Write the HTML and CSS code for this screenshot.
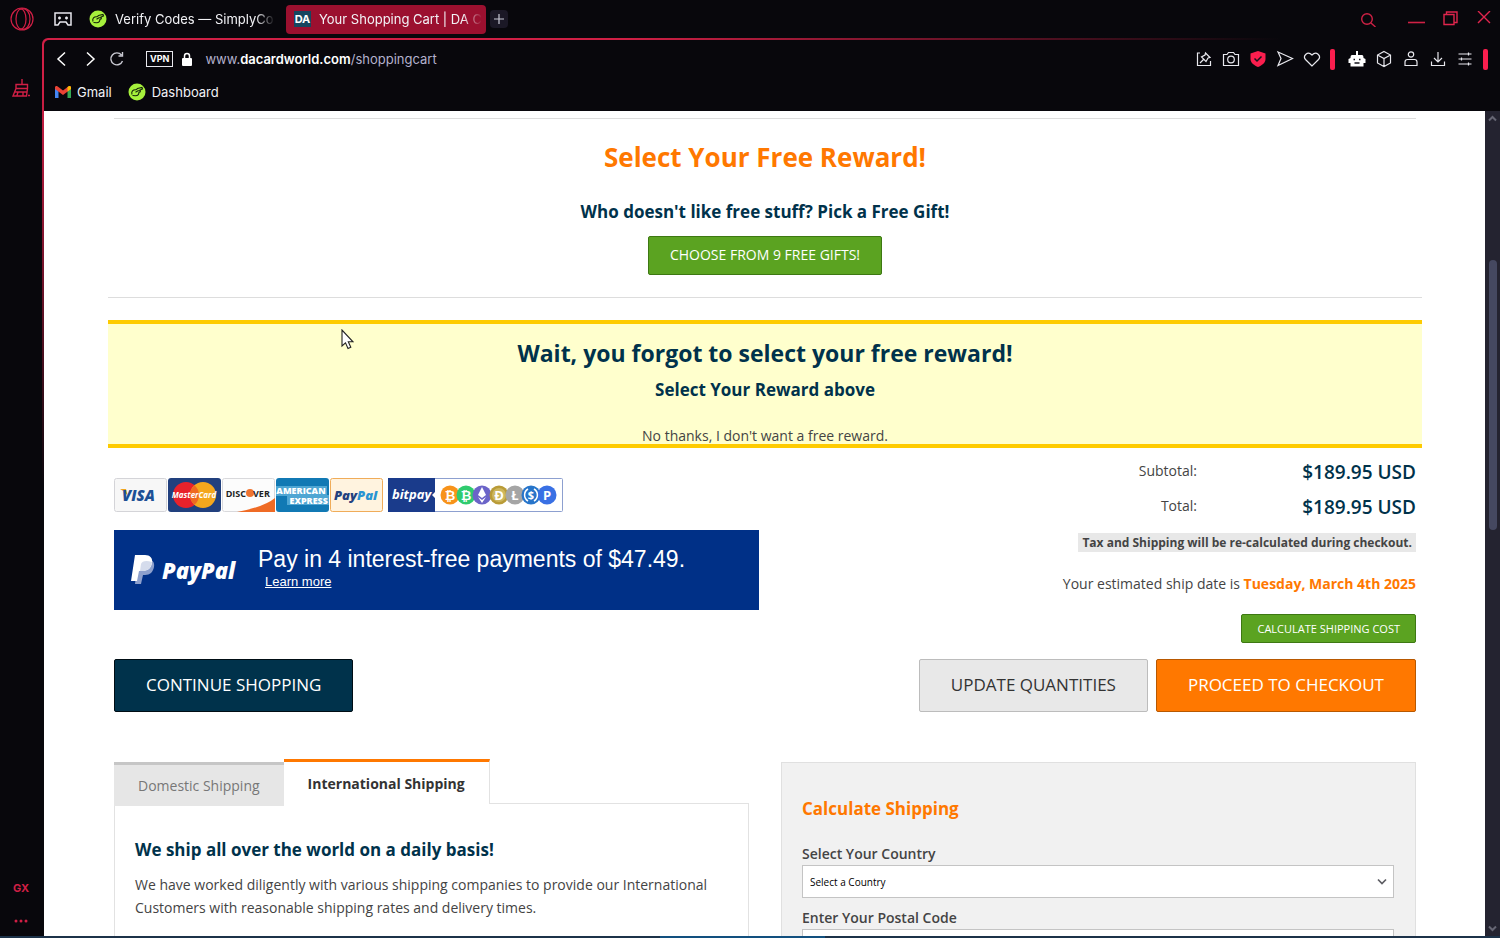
FILE: index.html
```html
<!DOCTYPE html>
<html lang="en">
<head>
    <meta charset="UTF-8">
    <meta name="viewport" content="width=device-width, initial-scale=1.0">
    <title>Your Shopping Cart | DA Card World</title>
    <link rel="stylesheet" href="styles.css">
</head>
<body>
    <!-- Shared symbols -->
    <svg class="symbols" aria-hidden="true">
        <symbol id="simply" viewBox="0 0 18 18">
            <circle cx="9" cy="9" r="8.5" fill="#a6f13c"/>
            <path d="M4 11.500C3 8.500 5 6.500 8 6.800L9.500 5.500 14 4.500 14.500 6 11.500 7.300M7.500 9.200L10 7.800 12 7.500C13 8.500 12 9.500 10.500 9.500M10.500 9.500C11.500 10.800 10 12.500 7.500 12.800L4.500 12.500" fill="none" stroke="#16240b" stroke-width="1.100"/>
        </symbol>
    </svg>

    <header class="tabbar">
        <button class="icon-btn opera" aria-label="Menu">
            <svg width="24" height="24" viewBox="0 0 24 24" fill="none" stroke="#d01f45" stroke-width="1.200"><circle cx="12" cy="12" r="11"/><ellipse cx="11" cy="12" rx="5" ry="10"/><path d="M10 2C17 0 20 6 20 12S17 24 10 22"/></svg>
        </button>
        <button class="icon-btn" aria-label="GX Corner">
            <svg width="18" height="14" viewBox="0 0 18 14" fill="none" stroke="#e8e8ee" stroke-width="1.500"><path d="M1 1H17V13H14L12 10H6L4 13H1Z"/><path d="M4 6H7M5.500 4.500V7.500M11 6H14M12.500 4.500V7.500"/></svg>
        </button>
        <a class="tab" href="#"><svg width="18" height="18"><use href="#simply"/></svg><span class="tab-title">Verify Codes — SimplyCo</span></a>
        <a class="tab active" href="#"><span class="da-logo">DA</span><span class="tab-title">Your Shopping Cart | DA C</span></a>
        <button class="icon-btn new-tab" aria-label="New tab"><svg width="12" height="12" viewBox="0 0 12 12" stroke="#c8c8d4" stroke-width="1.200"><path d="M6 1V11M1 6H11"/></svg></button>
        <div class="window-controls">
            <button class="icon-btn search" aria-label="Search tabs"><svg width="16" height="16" viewBox="0 0 16 16" fill="none" stroke="#cf2145" stroke-width="1.400"><circle cx="7" cy="8" r="5.300"/><path d="M11 12L15.500 16"/></svg></button>
            <button class="icon-btn" aria-label="Minimize"><svg width="17" height="16" viewBox="0 0 17 16" stroke="#cf2145" stroke-width="1.600"><path d="M0 11.500H17"/></svg></button>
            <button class="icon-btn" aria-label="Restore"><svg width="16" height="16" viewBox="0 0 16 16" fill="none" stroke="#e0254d" stroke-width="1.400"><path d="M1 3.500H11V13.500H1ZM3.500 3.500V1H14V11.500H11"/></svg></button>
            <button class="icon-btn" aria-label="Close"><svg width="14" height="16" viewBox="0 0 14 16" stroke="#e0254d" stroke-width="1.400"><path d="M1 0L13 12M13 0L1 12"/></svg></button>
        </div>
    </header>

    <div class="workspace">
        <nav class="sidebar">
            <button class="icon-btn" aria-label="Cleaner"><svg width="20" height="20" viewBox="0 0 20 20" fill="none" stroke="#d01f45" stroke-width="1.400"><path d="M11 0V5M5 5.500H16.500V9.500H5ZM5 9.500L2 17H15.500L16.500 9.500M4 13H15.500M7 13L6 16.500M12 13V16.500M17 16.500H19"/></svg></button>
            <div class="sidebar-bottom">
                <span class="gx">GX</span>
                <button class="icon-btn" aria-label="More"><svg width="14" height="4" viewBox="0 0 14 4" fill="#d01f45"><circle cx="2" cy="2" r="1.500"/><circle cx="7" cy="2" r="1.500"/><circle cx="12" cy="2" r="1.500"/></svg></button>
            </div>
        </nav>

        <div class="frame">
            <div class="window">
                <div class="toolbar">
                    <button class="icon-btn" aria-label="Back"><svg width="18" height="18" viewBox="0 0 18 18" fill="none" stroke="#fff" stroke-width="1.500"><path d="M13 2.500L6 9L13 15.500"/></svg></button>
                    <button class="icon-btn" aria-label="Forward"><svg width="18" height="18" viewBox="0 0 18 18" fill="none" stroke="#fff" stroke-width="1.500"><path d="M7 2.500L14 9L7 15.500"/></svg></button>
                    <button class="icon-btn" aria-label="Reload"><svg width="18" height="18" viewBox="0 0 18 18" fill="none" stroke="#c9c9d2" stroke-width="1.400"><path d="M13.500 5A6 6 0 1 0 14.500 11M14.500 2V6H10.500"/></svg></button>
                    <div class="address">
                        <span class="vpn">VPN</span>
                        <svg width="12" height="15" viewBox="0 0 12 15"><rect x="1" y="6" width="10" height="8" rx="1" fill="#fff"/><path d="M3.500 6V4A2.500 2.500 0 0 1 8.500 4V6" fill="none" stroke="#fff" stroke-width="1.500"/></svg>
                        <span class="url">www.<b>dacardworld.com</b>/shoppingcart</span>
                    </div>
                    <div class="tools">
                        <svg width="18" height="18" viewBox="0 0 18 18"><path d="M5 3H2.500V15.500H15.500V11M10.500 3L15 7.500L13 8L11 11.500L6.500 7L10 5ZM8.500 9.500L5 13"/></svg>
                        <svg width="18" height="18" viewBox="0 0 18 18"><path d="M1.500 4.500H5L6.500 2.500H11.500L13 4.500H16.500V15.500H1.500Z"/><circle cx="9" cy="9.500" r="3.300"/></svg>
                        <svg width="18" height="18" viewBox="0 0 18 18"><path class="pink" d="M9 1L16.500 3.500V9C16.500 13 12.500 15.500 9 17C5.500 15.500 1.500 13 1.500 9V3.500Z"/><path class="check" d="M5.500 8.500L8 11L12.500 6.500"/></svg>
                        <svg width="18" height="18" viewBox="0 0 18 18"><path d="M2 2L16.500 8.500L2 15.500L5 8.500Z"/></svg>
                        <svg width="18" height="18" viewBox="0 0 18 18"><path d="M9 16L2.500 9.500C-.5 6 4.500 .5 9 5C13.500 .5 18.500 6 15.500 9.500Z"/></svg>
                        <span class="marker"></span>
                        <svg class="robot" width="18" height="18" viewBox="0 0 18 18"><path class="solid" d="M8 1H10V5H14C15 5 15.500 6 15.500 8L17.500 9V13H15.500V16.500H2.500V13H.5V9L2.500 8C2.500 6 3 5 4 5H8Z"/><path class="check" d="M5.500 9.500H7M11 9.500H12.500M6.500 13H11.500"/></svg>
                        <svg width="18" height="18" viewBox="0 0 18 18"><path d="M9 1.500L15.500 5V13L9 16.500L2.500 13V5ZM2.500 5L9 8.500L15.500 5M9 8.500V16.500"/></svg>
                        <svg width="18" height="18" viewBox="0 0 18 18"><circle cx="9" cy="4.500" r="2.700"/><path d="M3 15.500V12C3 10.500 4 9.500 5.500 9.500H12.500C14 9.500 15 10.500 15 12V15.500Z"/></svg>
                        <svg width="18" height="18" viewBox="0 0 18 18"><path d="M2.500 11.500V15.500H15.500V11.500M9 2V12M5 8L9 12L13 8"/></svg>
                        <svg width="18" height="18" viewBox="0 0 18 18"><path d="M2.500 4H15.500M2.500 9H15.500M2.500 14H15.500M12.500 2.500V5.500M5.500 7.500V10.500M12.500 12.500V15.500"/></svg>
                        <span class="marker"></span>
                    </div>
                </div>

                <div class="bookmarks">
                    <a href="#"><svg width="16" height="12" viewBox="0 0 16 12"><path d="M0 1.500V12H3.500V4.500Z" fill="#4285f4"/><path d="M16 1.500V12H12.500V4.500Z" fill="#34a853"/><path d="M0 3V1.500C0 0 1.500-.5 2.700.4L8 4.500 13.300.4C14.500-.5 16 0 16 1.500V3L8 9Z" fill="#ea4335"/><path d="M12.500 1V5.600L16 3V1.500C16 0 14.500-.5 13.300.4Z" fill="#fbbc04"/></svg>Gmail</a>
                    <a href="#"><svg width="18" height="18"><use href="#simply"/></svg>Dashboard</a>
                </div>

                <div class="viewport">
                    <main class="page">
                        <section class="reward">
                            <h1>Select Your Free Reward!</h1>
                            <h2>Who doesn't like free stuff? Pick a Free Gift!</h2>
                            <button class="btn green">CHOOSE FROM 9 FREE GIFTS!</button>
                        </section>

                        <section class="notice">
                            <h2>Wait, you forgot to select your free reward!</h2>
                            <h3>Select Your Reward above</h3>
                            <a href="#">No thanks, I don't want a free reward.</a>
                        </section>

                        <section class="summary">
                            <div class="payments">
                                <div class="cards">
                                    <svg width="53" height="34" viewBox="0 0 53 34"><rect x=".5" y=".5" width="52" height="33" rx="2" fill="#f7f7f7" stroke="#d4d4d8"/><path d="M6 11H12L14 19Q12 14 6 11Z" fill="#f0a51e"/><text x="8" y="23" class="logo-text visa">VISA</text></svg>
                                    <svg width="53" height="34" viewBox="0 0 53 34"><rect width="53" height="34" rx="3" fill="#21407e"/><circle cx="18" cy="17" r="13" fill="#e8222b"/><circle cx="35" cy="17" r="13" fill="#f4a71d"/><path d="M26.500 7.200A13 13 0 0 1 26.500 26.800A13 13 0 0 1 26.500 7.200Z" fill="#ef6a20"/><text x="26" y="20" text-anchor="middle" class="logo-text master">MasterCard</text></svg>
                                    <svg width="53" height="34" viewBox="0 0 53 34"><rect x=".5" y=".5" width="52" height="33" rx="2" fill="#fcfcfc" stroke="#d9d9dc"/><path d="M15 34Q42 29 53 20V34Z" fill="#ef6b25"/><circle cx="28" cy="15" r="4" fill="#ee7430"/><text x="24" y="19" text-anchor="end" class="logo-text discover">DISC</text><text x="31" y="19" class="logo-text discover">VER</text></svg>
                                    <svg width="53" height="34" viewBox="0 0 53 34"><rect width="53" height="34" rx="3" fill="#1179b4"/><path d="M0 8H51V17H53V27H11V18H0Z" fill="#4fa6d3"/><text x="25" y="16" text-anchor="middle" class="logo-text amex">AMERICAN</text><text x="52" y="26" text-anchor="end" class="logo-text amex">EXPRESS</text></svg>
                                    <svg width="53" height="34" viewBox="0 0 53 34"><rect x=".5" y=".5" width="52" height="33" rx="2" fill="#fff3df" stroke="#f0ac59"/><text x="4" y="22" class="logo-text pp">Pay<tspan fill="#2894d2">Pal</tspan></text></svg>
                                    <svg class="bitpay" width="175" height="34" viewBox="0 0 175 34"><rect x=".5" y=".5" width="174" height="33" rx="1" fill="#fff" stroke="#8da0d0"/><path d="M0 0H47V14L44 17L47 20V34H0Z" fill="#1a3b8b"/><text x="4" y="21" class="logo-text bp">bitpay</text>
                                        <g class="coins"><circle cx="62" cy="17" r="9.500" fill="#f7931a"/><circle cx="78" cy="17" r="9.500" fill="#2fcb6e"/><circle cx="94" cy="17" r="9.500" fill="#6b64c8"/><circle cx="111" cy="17" r="9.500" fill="#b99b37"/><circle cx="111" cy="17" r="7" fill="#cdb65c"/><circle cx="127" cy="17" r="9.500" fill="#a5a5a5"/><circle cx="143" cy="17" r="9.500" fill="#2775ca"/><circle cx="159" cy="17" r="9.500" fill="#3970e4"/>
                                        <text x="62" y="22">₿</text><text x="78" y="22">₿</text><path d="M94 9L98 17L94 20L90 17ZM90 19L94 25L98 19L94 22Z" fill="#fff"/><text x="111" y="22">Ð</text><text x="127" y="22">Ł</text><text x="143" y="21" class="small">$</text><path d="M140 11A7 7 0 0 0 140 23M146 11A7 7 0 0 1 146 23" fill="none" stroke="#fff" stroke-width="1.500"/><text x="159" y="22">P</text></g></svg>
                                </div>
                                <div class="paypal-banner">
                                    <svg width="108" height="30" viewBox="0 0 108 30"><path d="M7 4H16C21 4 24 7 23 12C22 17 19 20 14 20H12L10 29H4Z" fill="#8da0cd"/><path d="M4 0H14C19 0 22 3 21 8C20 14 16 16 11 16H8L6 26H0Z" fill="#fff"/><path d="M9 16L10 9C11 6 15 5 21 7C20 14 16 16 11 16Z" fill="#d5dcec"/><text x="31" y="24" class="logo-text paypal-word">PayPal</text></svg>
                                    <div>
                                        <p>Pay in 4 interest-free payments of $47.49.</p>
                                        <a href="#">Learn more</a>
                                    </div>
                                </div>
                            </div>

                            <div class="totals">
                                <table>
                                    <tr><th scope="row">Subtotal:</th><td>$189.95 USD</td></tr>
                                    <tr><th scope="row">Total:</th><td>$189.95 USD</td></tr>
                                </table>
                                <p class="tax">Tax and Shipping will be re-calculated during checkout.</p>
                                <p class="ship-date">Your estimated ship date is <strong>Tuesday, March 4th 2025</strong></p>
                                <button class="btn green small">CALCULATE SHIPPING COST</button>
                            </div>
                        </section>

                        <section class="actions">
                            <button class="btn navy large">CONTINUE SHOPPING</button>
                            <button class="btn grey large push">UPDATE QUANTITIES</button>
                            <button class="btn orange large">PROCEED TO CHECKOUT</button>
                        </section>

                        <section class="shipping">
                            <div class="info">
                                <div class="info-tabs" role="tablist">
                                    <button role="tab" aria-selected="false">Domestic Shipping</button>
                                    <button role="tab" aria-selected="true">International Shipping</button>
                                </div>
                                <div class="info-body">
                                    <h3>We ship all over the world on a daily basis!</h3>
                                    <p>We have worked diligently with various shipping companies to provide our International Customers with reasonable shipping rates and delivery times.</p>
                                </div>
                            </div>
                            <form class="calculator">
                                <h3>Calculate Shipping</h3>
                                <label for="country">Select Your Country</label>
                                <div class="select">
                                    <select id="country"><option>Select a Country</option></select>
                                    <svg width="10" height="8" viewBox="0 0 10 8" fill="none" stroke="#5d5d63" stroke-width="1.700"><path d="M1 1.500L5 5.500L9 1.500"/></svg>
                                </div>
                                <label for="postal">Enter Your Postal Code</label>
                                <input id="postal" type="text">
                            </form>
                        </section>
                    </main>
                    <div class="scrollbar">
                        <svg width="9" height="7" viewBox="0 0 9 7" fill="none" stroke="#666674" stroke-width="2"><path d="M1 5.500L4.500 2L8 5.500"/></svg>
                        <div class="thumb"></div>
                        <svg width="9" height="7" viewBox="0 0 9 7" fill="none" stroke="#666674" stroke-width="2"><path d="M1 1.500L4.500 5L8 1.500"/></svg>
                    </div>
                </div>
            </div>
        </div>
    </div>

    <div class="taskbar-edge"></div>
    <svg class="cursor" width="13" height="21" viewBox="0 0 13 21"><path d="M1 1V17L4.500 13.800L7 19.500L9.800 18.300L7.300 12.800H12Z" fill="#fff" stroke="#222" stroke-width="1.100"/></svg>
</body>
</html>
```
FILE: styles.css
```css
* {
    box-sizing: border-box;
    margin: 0;
    padding: 0;
}

body {
    height: 100vh;
    display: flex;
    flex-direction: column;
    overflow: hidden;
    background: #08070c;
    color: #444;
    font-family: "Open Sans", sans-serif;
    font-size: 14px;
}

button, input, select {
    font-family: inherit;
}

a {
    color: inherit;
    text-decoration: none;
}

.symbols {
    display: none;
}

.icon-btn {
    display: flex;
    align-items: center;
    justify-content: center;
    border: 0;
    background: none;
    flex-shrink: 0;
}

/* Browser chrome */
.tabbar {
    height: 38px;
    display: flex;
    align-items: center;
    font-family: Inter, sans-serif;
    font-size: 13px;
    color: #f2f2f6;
}

.opera {
    width: 43px;
}

.tabbar .opera + .icon-btn {
    width: 40px;
}

.tab {
    width: 196px;
    height: 29px;
    padding: 0 4px 0 6px;
    display: flex;
    align-items: center;
    gap: 8px;
    border-radius: 4px;
}

.tab svg {
    flex-shrink: 0;
}

.tab.active {
    width: 200px;
    margin-left: 7px;
    padding-left: 8px;
    background: #9b102f;
}

.tab-title {
    flex: 1;
    white-space: nowrap;
    mask-image: linear-gradient(to right, #000 88%, transparent);
}

.da-logo {
    width: 17px;
    height: 16px;
    background: #17465f;
    color: #fff;
    font-size: 11px;
    font-weight: 700;
    line-height: 16px;
    text-align: center;
}

.new-tab {
    width: 18px;
    height: 18px;
    margin-left: 4px;
    border-radius: 4px;
    background: #1b1826;
}

.window-controls {
    margin-left: auto;
    padding-right: 9px;
    display: flex;
    align-items: center;
    gap: 18px;
}

.window-controls .search {
    margin-right: 14px;
}

.workspace {
    flex: 1;
    min-height: 0;
    display: flex;
}

.sidebar {
    width: 42px;
    padding: 41px 0 13px;
    display: flex;
    flex-direction: column;
    align-items: center;
    justify-content: space-between;
}

.sidebar-bottom {
    display: flex;
    flex-direction: column;
    align-items: center;
    gap: 24px;
}

.gx {
    color: #d01f45;
    font: 700 11px/14px Inter, sans-serif;
}

/* red outline, fading out to the right and downwards */
.frame {
    flex: 1;
    min-width: 0;
    padding: 2px 0 0 2px;
    border-radius: 6px 0 0 0;
    background:
        linear-gradient(to bottom, transparent 5%, #08070c 50%) left / 2px 100% no-repeat,
        linear-gradient(to right, #d01f45, #d01f45 40%, #08070c 85%);
}

.window {
    height: 100%;
    display: flex;
    flex-direction: column;
    border-radius: 5px 0 0 0;
    background: #08070c;
}

.toolbar {
    height: 38px;
    padding: 0 12px 0 8px;
    display: flex;
    align-items: center;
    gap: 10px;
}

.address {
    flex: 1;
    margin-left: 10px;
    display: flex;
    align-items: center;
    gap: 8px;
    font-family: Inter, sans-serif;
    font-size: 13px;
    color: #b4b1cc;
}

.address b {
    color: #fff;
    font-weight: 600;
}

.url {
    margin-left: 4px;
}

.vpn {
    padding: 0 3px;
    border: 1px solid #e8e8ee;
    color: #fff;
    font-size: 9px;
    font-weight: 700;
    line-height: 14px;
}

.tools {
    display: flex;
    align-items: center;
    gap: 9px;
}

.tools svg {
    fill: none;
    stroke: #e8e8ee;
    stroke-width: 1.2;
}

.tools .pink {
    fill: #fa1e4e;
    stroke: none;
}

.tools .solid {
    fill: #fff;
    stroke: none;
}

.tools .check {
    stroke: #15131c;
    stroke-width: 1.5;
}

.marker {
    width: 5px;
    height: 21px;
    border-radius: 2px;
    background: #fa1e4e;
}

.robot {
    margin-left: 4px;
}

.bookmarks {
    height: 33px;
    padding: 0 11px 5px;
    display: flex;
    align-items: center;
    gap: 16px;
    color: #f2f2f6;
    font-family: Inter, sans-serif;
    font-size: 13px;
}

.bookmarks a {
    display: flex;
    align-items: center;
    gap: 6px;
}

.viewport {
    flex: 1;
    min-height: 0;
    display: flex;
    background: #fff;
}

.scrollbar {
    width: 15px;
    padding: 4px 0;
    display: flex;
    flex-direction: column;
    align-items: center;
    background: #242330;
}

.thumb {
    width: 8px;
    height: 33%;
    margin: 138px 0 auto;
    border-radius: 4px;
    background: #454860;
}

/* Cart page */
.page {
    flex: 1;
    min-width: 0;
    padding: 7px 69px 0 70px;
    overflow: hidden;
}

.page h1,
.page h2,
.page h3 {
    color: #00324b;
    font-weight: 700;
}

.btn {
    border: 1px solid;
    border-radius: 2px;
    font-weight: 400;
    color: #fff;
}

.btn.green {
    height: 39px;
    padding: 0 21px 2px;
    background: #5ba321;
    border-color: #3d7812;
    font-size: 14px;
}

.btn.green.small {
    height: 29px;
    padding: 0 15px;
    font-size: 11px;
}

.btn.large {
    height: 53px;
    padding: 0 31px 2px;
    font-size: 17px;
}

.btn.navy {
    background: #00324b;
    border-color: #000d14;
}

.btn.grey {
    background: #e8e8e8;
    border-color: #bcbcbc;
    color: #333;
}

.btn.orange {
    background: #ff7800;
    border-color: #b85800;
}

.reward {
    border-top: 1px solid #ddd;
    display: flex;
    flex-direction: column;
    align-items: center;
}

.page .reward h1 {
    margin-top: 19px;
    color: #ff7800;
    font-size: 26px;
    line-height: 38px;
}

.reward h2 {
    margin: 24px 0 12px;
    font-size: 17px;
    line-height: 24px;
}

/* full-width rule between the reward picker and the notice */
.reward::after {
    content: "";
    align-self: stretch;
    height: 1px;
    margin: 22px -6px 0;
    background: #ddd;
}

.notice {
    height: 128px;
    margin: 22px -6px 0;
    padding-top: 14px;
    display: flex;
    flex-direction: column;
    align-items: center;
    background: #ffffcd;
    border-top: 4px solid #fecb00;
    border-bottom: 4px solid #fecb00;
}

.notice h2 {
    font-size: 23px;
    line-height: 30px;
}

.notice h3 {
    margin: 10px 0 24px;
    font-size: 17px;
    line-height: 24px;
}

.notice a {
    line-height: 20px;
}

.summary {
    display: flex;
    justify-content: space-between;
}

.payments {
    width: 645px;
    padding-top: 30px;
}

.cards {
    display: flex;
    gap: 1px;
    margin-bottom: 18px;
}

.bitpay {
    margin-left: 4px;
}

.logo-text {
    font-family: "Open Sans", sans-serif;
    font-weight: 800;
    font-style: italic;
}

.visa {
    fill: #1c5095;
    font-size: 15px;
}

.master {
    fill: #fff;
    font-size: 8px;
    font-weight: 700;
}

.discover {
    fill: #222;
    font-size: 9px;
    font-style: normal;
    font-weight: 700;
}

.amex {
    fill: #fff;
    font-size: 9px;
    font-style: normal;
}

.pp {
    fill: #23417f;
    font-size: 13px;
}

.bp {
    fill: #fff;
    font-size: 13px;
    font-weight: 700;
}

.coins text {
    fill: #fff;
    font-size: 13px;
    font-weight: 700;
    text-anchor: middle;
}

.coins .small {
    font-size: 11px;
}

.paypal-word {
    fill: #fff;
    font-size: 22px;
}

.paypal-banner {
    height: 80px;
    padding: 0 17px;
    display: flex;
    align-items: center;
    gap: 19px;
    background: #003087;
    color: #fff;
    font-family: "Liberation Sans", sans-serif;
}

.paypal-banner div {
    padding-bottom: 6px;
}

.paypal-banner p {
    font-size: 23px;
    line-height: 28px;
}

.paypal-banner a {
    margin-left: 7px;
    font-size: 13px;
    text-decoration: underline;
}

.totals {
    padding-top: 7px;
    display: flex;
    flex-direction: column;
    align-items: flex-end;
}

.totals table {
    border-collapse: collapse;
    text-align: right;
}

.totals tr {
    height: 35px;
}

.totals th {
    padding-bottom: 4px;
    font-weight: 400;
}

.totals td {
    width: 219px;
    padding-bottom: 2px;
    color: #00324b;
    font-size: 19px;
    font-weight: 600;
}

.tax {
    margin-top: 8px;
    padding: 0 4px;
    background: #e8e8e8;
    font-size: 12px;
    font-weight: 700;
    line-height: 19px;
}

.ship-date {
    margin: 22px 0 20px;
    line-height: 20px;
}

.ship-date strong {
    color: #ff7800;
}

.actions {
    margin-top: 16px;
    display: flex;
    gap: 8px;
}

.push {
    margin-left: auto;
}

.shipping {
    margin-top: 47px;
    display: grid;
    grid-template-columns: 1fr 1fr;
    gap: 32px;
}

.info-tabs {
    display: flex;
    align-items: flex-start;
}

.info-tabs button {
    height: 44px;
    margin: 3px 0 -3px;
    padding: 0 24px;
    position: relative;
    border: 0;
    border-top: 3px solid #c6c6c6;
    background: #e6e6e6;
    color: #777;
    font-size: 14px;
}

.info-tabs button[aria-selected="true"] {
    height: 45px;
    margin: 0 0 -1px;
    border-top-color: #ff7800;
    border-right: 1px solid #e2e2e2;
    background: #fff;
    color: #333;
    font-weight: 700;
}

.info-body {
    height: 240px;
    padding: 34px 20px;
    border: 1px solid #e2e2e2;
}

.info-body h3 {
    margin-bottom: 11px;
    font-size: 17px;
    line-height: 24px;
}

.info-body p {
    line-height: 23px;
}

.calculator {
    margin-top: 3px;
    padding: 34px 21px 34px 20px;
    border: 1px solid #e0e0e0;
    background: #f1f1f1;
}

.page .calculator h3 {
    margin-bottom: 22px;
    color: #ff7800;
    font-size: 17px;
    line-height: 24px;
}

.calculator label {
    display: block;
    font-weight: 600;
    line-height: 22px;
}

.select {
    position: relative;
    margin-bottom: 9px;
}

.select svg {
    position: absolute;
    right: 7px;
    top: 13px;
    pointer-events: none;
}

.calculator select,
.calculator input {
    display: block;
    width: 100%;
    height: 33px;
    padding: 0 7px;
    appearance: none;
    border: 1px solid #c4c4c4;
    border-radius: 0;
    background: #fff;
    color: #000;
    font-size: 10px;
}

.taskbar-edge {
    height: 2px;
    background: linear-gradient(to right, #1c3249 44%, #12507f 44%, #12507f 55%, #1c3249 55%);
}

.cursor {
    position: absolute;
    left: 341px;
    top: 329px;
}
```
